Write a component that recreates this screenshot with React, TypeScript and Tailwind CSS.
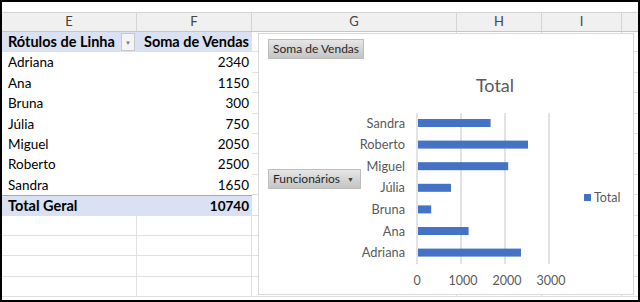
import React from "react";

const rows = [
  { name: "Adriana", value: 2340 },
  { name: "Ana", value: 1150 },
  { name: "Bruna", value: 300 },
  { name: "Júlia", value: 750 },
  { name: "Miguel", value: 2050 },
  { name: "Roberto", value: 2500 },
  { name: "Sandra", value: 1650 },
];

const total = rows.reduce((s, r) => s + r.value, 0);

// cells to the right of the pivot (mostly hidden by the chart)
const RestCells = () => (
  <>
    <div className="w-[205px] h-full border-r border-b border-[#e1e1e1]" />
    <div className="w-[85px] h-full border-r border-b border-[#e1e1e1]" />
    <div className="w-[80px] h-full border-r border-b border-[#e1e1e1]" />
    <div className="flex-1 h-full border-b border-[#e1e1e1]" />
  </>
);

const Chart = () => {
  const axisX = 158;
  const scale = 0.044;
  const chartRows = [...rows].reverse();
  return (
    <div className="absolute left-[256px] top-[31px] w-[376px] h-[262px] bg-white border border-[#d9d9d9]">
      <div className="absolute left-[9px] top-[5px] h-[20px] px-[4px] flex items-center text-[12px] text-[#262626] bg-gradient-to-b from-[#e6e6e6] to-[#c4c4c4] border border-[#bdbdbd]">
        Soma de Vendas
      </div>
      <div className="absolute left-[9px] top-[135px] h-[20px] pl-[4px] pr-[6px] flex items-center gap-[7px] text-[12px] text-[#262626] bg-gradient-to-b from-[#e6e6e6] to-[#c4c4c4] border border-[#bdbdbd]">
        Funcionários
        <span className="text-[7px] text-[#404040]">▼</span>
      </div>
      <svg width="374" height="260" className="absolute left-0 top-0">
        <text x="236" y="58" textAnchor="middle" fontSize="18" fill="#595959" fontFamily="Lato, sans-serif">
          Total
        </text>
        {[1, 2, 3].map((i) => (
          <line key={i} x1={axisX + i * 44} x2={axisX + i * 44} y1="79" y2="230" stroke="#d9d9d9" strokeWidth="1.5" />
        ))}
        <line x1={axisX} x2={axisX} y1="79" y2="230" stroke="#d9d9d9" strokeWidth="1.5" />
        {chartRows.map((r, i) => {
          const cy = 89 + i * 21.6;
          return (
            <g key={r.name}>
              <text x="146" y={cy + 4.5} textAnchor="end" fontSize="12.8" fill="#595959" fontFamily="Lato, sans-serif">
                {r.name}
              </text>
              <rect x={axisX + 1} y={cy - 4} width={r.value * scale} height="8" fill="#4472c4" />
            </g>
          );
        })}
        {[0, 1000, 2000, 3000].map((v, i) => (
          <text key={v} x={axisX + i * 44 + (i > 0 ? 2 : 0)} y="251" textAnchor="middle" fontSize="12.5" fill="#595959" fontFamily="Lato, sans-serif">
            {v}
          </text>
        ))}
        <rect x="325" y="160" width="7" height="7" fill="#4472c4" />
        <text x="335" y="168" fontSize="12.5" fill="#595959" fontFamily="Lato, sans-serif">
          Total
        </text>
      </svg>
    </div>
  );
};

const App = () => {
  return (
    <div className="relative w-[640px] h-[302px] overflow-hidden bg-white border-2 border-black font-['Lato',sans-serif] text-[13.5px] text-black">
      <div className="h-[11px] border-b border-[#d4d4d4]" />
      {/* column headers */}
      <div className="flex h-[19px] bg-[#f0f0f0] border-b border-[#c6c6c6] text-[13px] text-[#444]">
        <div className="w-[135px] flex items-center justify-center border-r border-[#d4d4d4]">E</div>
        <div className="w-[115px] flex items-center justify-center border-r border-[#d4d4d4]">F</div>
        <div className="w-[205px] flex items-center justify-center border-r border-[#d4d4d4]">G</div>
        <div className="w-[85px] flex items-center justify-center border-r border-[#d4d4d4]">H</div>
        <div className="w-[80px] flex items-center justify-center border-r border-[#d4d4d4]">I</div>
        <div className="flex-1" />
      </div>

      {/* pivot header */}
      <div className="flex h-[20.4px]">
        <div className="w-[135px] h-full bg-[#d9e1f2] flex items-center pl-[6px] font-bold text-[14.5px] relative">
          Rótulos de Linha
          <span className="absolute left-[119px] top-[1px] w-[14px] h-[18px] bg-[#f4f4f4] border border-[#c8c8c8] flex items-center justify-center text-[6px] text-[#777]">
            ▼
          </span>
        </div>
        <div className="w-[115px] h-full bg-[#d9e1f2] flex items-center justify-end pr-[3px] font-bold text-[14.5px]">
          Soma de Vendas
        </div>
        <RestCells />
      </div>

      {rows.map((r) => (
        <div key={r.name} className="flex h-[20.4px]">
          <div className="w-[135px] h-full flex items-center pl-[6px]">{r.name}</div>
          <div className="w-[115px] h-full flex items-center justify-end pr-[3px]">{r.value}</div>
          <RestCells />
        </div>
      ))}

      <div className="flex h-[20.4px]">
        <div className="w-[135px] h-full bg-[#d9e1f2] border-t border-[#8ea9db] flex items-center pl-[6px] font-bold text-[14.5px]">
          Total Geral
        </div>
        <div className="w-[115px] h-full bg-[#d9e1f2] border-t border-[#8ea9db] flex items-center justify-end pr-[3px] font-bold">
          {total}
        </div>
        <RestCells />
      </div>

      {[0, 1, 2, 3].map((i) => (
        <div key={i} className="flex h-[20.4px]">
          <div className="w-[135px] h-full border-r border-b border-[#e1e1e1]" />
          <div className="w-[115px] h-full border-r border-b border-[#e1e1e1]" />
          <RestCells />
        </div>
      ))}

      <Chart />
    </div>
  );
};

export default App;
